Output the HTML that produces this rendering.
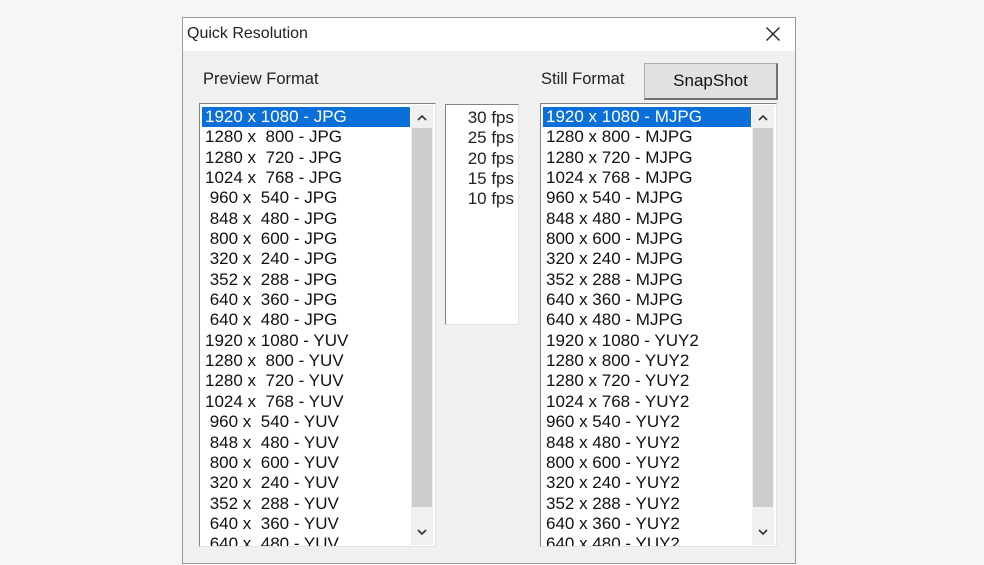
<!DOCTYPE html>
<html><head><meta charset="utf-8"><style>
*{margin:0;padding:0;box-sizing:border-box}
body{width:984px;height:565px;background:#f6f6f6;position:relative;overflow:hidden;font-family:"Liberation Sans",Arial,sans-serif;color:#000}
.win{position:absolute;left:182px;top:17px;width:614px;height:547px;background:#f0f0f0;border:1px solid #9a9a9a}
.title{position:absolute;left:0;top:0;right:0;height:33px;background:#fff}
.title span{position:absolute;left:4px;top:7px;font-size:16px;color:#222}
.x{position:absolute;right:14px;top:8px}
.lbl{position:absolute;font-size:16.5px;color:#222}
.list{position:absolute;background:#fff;border:1px solid #828282;border-right-color:#e3e3e3;border-bottom-color:#e3e3e3;overflow:hidden}
.list .rows{position:absolute;left:2px;top:3px}
.list .r{height:20.35px;line-height:20.35px;font-size:17px;padding-left:3px;white-space:pre;color:#111}
.list .r.sel{background:#0a6fd8;color:#fff}
.sb{position:absolute;top:1px;bottom:1px;width:22px;background:#f0f0f0}
.sb .thumb{position:absolute;left:1px;right:1px;top:23px;bottom:38px;background:#cdcdcd}
.sb .up,.sb .dn{position:absolute;left:6px;width:10px;height:8px}
.btn{position:absolute;left:461px;top:45px;width:134px;height:37px;background:#e1e1e1;border:1px solid #adadad;border-right:2px solid #707070;border-bottom:2px solid #707070;font-size:17px;text-align:center;line-height:33px;color:#111}
.fps{position:absolute;left:262px;top:86px;width:74px;height:221px;background:#fff;border:1px solid #828282;border-right-color:#e3e3e3;border-bottom-color:#e3e3e3}
.fps div{height:20.35px;line-height:20.35px;font-size:17px;text-align:right;padding-right:4px;color:#222}
</style></head><body>
<div class="win">
 <div class="title"><span>Quick Resolution</span>
  <svg class="x" width="16" height="16" viewBox="0 0 16 16"><path d="M1.5 1.5L14.5 14.5M14.5 1.5L1.5 14.5" stroke="#222" stroke-width="1.4"/></svg>
 </div>
 <div class="lbl" style="left:20px;top:52px">Preview Format</div>
 <div class="lbl" style="left:358px;top:52px">Still Format</div>
 <div class="btn">SnapShot</div>

 <div class="list" style="left:16px;top:85px;width:237px;height:444px">
  <div class="rows" style="width:208px">
   <div class="r sel">1920 x 1080 - JPG</div>
   <div class="r">1280 x  800 - JPG</div>
   <div class="r">1280 x  720 - JPG</div>
   <div class="r">1024 x  768 - JPG</div>
   <div class="r"> 960 x  540 - JPG</div>
   <div class="r"> 848 x  480 - JPG</div>
   <div class="r"> 800 x  600 - JPG</div>
   <div class="r"> 320 x  240 - JPG</div>
   <div class="r"> 352 x  288 - JPG</div>
   <div class="r"> 640 x  360 - JPG</div>
   <div class="r"> 640 x  480 - JPG</div>
   <div class="r">1920 x 1080 - YUV</div>
   <div class="r">1280 x  800 - YUV</div>
   <div class="r">1280 x  720 - YUV</div>
   <div class="r">1024 x  768 - YUV</div>
   <div class="r"> 960 x  540 - YUV</div>
   <div class="r"> 848 x  480 - YUV</div>
   <div class="r"> 800 x  600 - YUV</div>
   <div class="r"> 320 x  240 - YUV</div>
   <div class="r"> 352 x  288 - YUV</div>
   <div class="r"> 640 x  360 - YUV</div>
   <div class="r"> 640 x  480 - YUV</div>
  </div>
  <div class="sb" style="left:211px">
   <svg class="up" style="top:9px" viewBox="0 0 10 8"><path d="M1 6L5 2L9 6" fill="none" stroke="#333" stroke-width="1.6"/></svg>
   <div class="thumb"></div>
   <svg class="dn" style="bottom:9px" viewBox="0 0 10 8"><path d="M1 2L5 6L9 2" fill="none" stroke="#333" stroke-width="1.6"/></svg>
  </div>
 </div>

 <div class="fps"><div style="height:3px"></div>
  <div>30 fps</div><div>25 fps</div><div>20 fps</div><div>15 fps</div><div>10 fps</div>
 </div>

 <div class="list" style="left:357px;top:85px;width:237px;height:444px">
  <div class="rows" style="width:208px">
   <div class="r sel">1920 x 1080 - MJPG</div>
   <div class="r">1280 x 800 - MJPG</div>
   <div class="r">1280 x 720 - MJPG</div>
   <div class="r">1024 x 768 - MJPG</div>
   <div class="r">960 x 540 - MJPG</div>
   <div class="r">848 x 480 - MJPG</div>
   <div class="r">800 x 600 - MJPG</div>
   <div class="r">320 x 240 - MJPG</div>
   <div class="r">352 x 288 - MJPG</div>
   <div class="r">640 x 360 - MJPG</div>
   <div class="r">640 x 480 - MJPG</div>
   <div class="r">1920 x 1080 - YUY2</div>
   <div class="r">1280 x 800 - YUY2</div>
   <div class="r">1280 x 720 - YUY2</div>
   <div class="r">1024 x 768 - YUY2</div>
   <div class="r">960 x 540 - YUY2</div>
   <div class="r">848 x 480 - YUY2</div>
   <div class="r">800 x 600 - YUY2</div>
   <div class="r">320 x 240 - YUY2</div>
   <div class="r">352 x 288 - YUY2</div>
   <div class="r">640 x 360 - YUY2</div>
   <div class="r">640 x 480 - YUY2</div>
  </div>
  <div class="sb" style="left:211px">
   <svg class="up" style="top:9px" viewBox="0 0 10 8"><path d="M1 6L5 2L9 6" fill="none" stroke="#333" stroke-width="1.6"/></svg>
   <div class="thumb"></div>
   <svg class="dn" style="bottom:9px" viewBox="0 0 10 8"><path d="M1 2L5 6L9 2" fill="none" stroke="#333" stroke-width="1.6"/></svg>
  </div>
 </div>
</div>
</body></html>
